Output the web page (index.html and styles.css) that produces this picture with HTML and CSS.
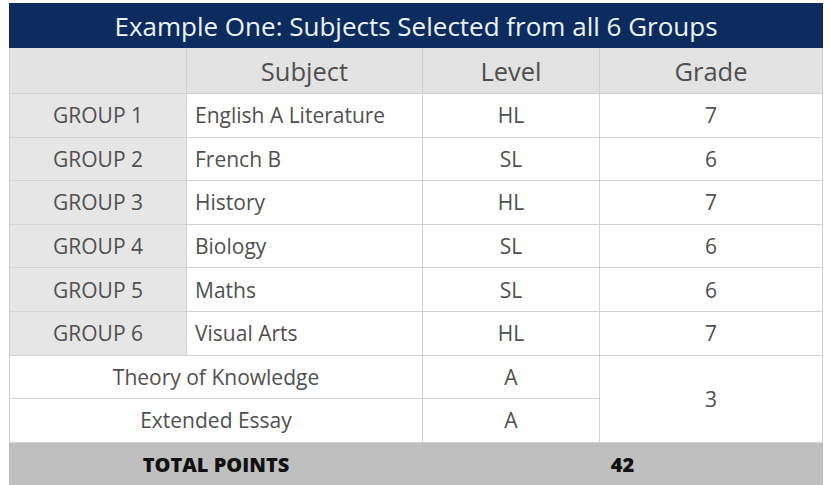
FILE: index.html
```html
<!DOCTYPE html>
<html>
<head>
<meta charset="utf-8">
<link rel="stylesheet" href="styles.css">
</head>
<body>
<table class="ib">
  <colgroup>
    <col class="c1"><col class="c2"><col class="c3"><col class="c4">
  </colgroup>
  <thead>
    <tr class="title"><th colspan="4">Example One: Subjects Selected from all 6 Groups</th></tr>
    <tr class="head"><th></th><th>Subject</th><th>Level</th><th>Grade</th></tr>
  </thead>
  <tbody>
    <tr><td class="grp">GROUP 1</td><td class="subj">English A Literature</td><td class="ctr">HL</td><td class="ctr">7</td></tr>
    <tr><td class="grp">GROUP 2</td><td class="subj">French B</td><td class="ctr">SL</td><td class="ctr">6</td></tr>
    <tr><td class="grp">GROUP 3</td><td class="subj">History</td><td class="ctr">HL</td><td class="ctr">7</td></tr>
    <tr><td class="grp">GROUP 4</td><td class="subj">Biology</td><td class="ctr">SL</td><td class="ctr">6</td></tr>
    <tr><td class="grp">GROUP 5</td><td class="subj">Maths</td><td class="ctr">SL</td><td class="ctr">6</td></tr>
    <tr><td class="grp">GROUP 6</td><td class="subj">Visual Arts</td><td class="ctr">HL</td><td class="ctr">7</td></tr>
    <tr><td class="ctr" colspan="2">Theory of Knowledge</td><td class="ctr">A</td><td class="ctr" rowspan="2">3</td></tr>
    <tr><td class="ctr" colspan="2">Extended Essay</td><td class="ctr">A</td></tr>
    <tr class="total"><td colspan="2">TOTAL POINTS</td><td colspan="2" class="sum">42</td></tr>
  </tbody>
</table>
</body>
</html>
```
FILE: styles.css
```css
html, body {
  margin: 0;
  padding: 0;
  background: #ffffff;
}
body {
  padding: 3px 0 0 9px;
  font-family: "Open Sans", "Noto Sans", sans-serif;
  color: #505050;
}
.ib {
  border-collapse: collapse;
  table-layout: fixed;
  width: 813px;
}
.c1 { width: 177px; }
.c2 { width: 236px; }
.c3 { width: 177px; }
.c4 { width: 223px; }
.ib th, .ib td {
  border: 1px solid #d2d2d2;
  padding: 0;
  font-weight: 400;
}
.title th {
  background: #0c2b5e;
  color: #eef4fa;
  height: 43px;
  font-size: 26px;
  font-weight: 500;
  border-color: #0c2b5e;
}
.head th {
  background: #e3e3e3;
  height: 45px;
  font-size: 25.5px;
  color: #4f4f4f;
  border-color: #d0d0d0;
}
.ib tbody tr { height: 43.6px; }
.ib td {
  font-size: 21px;
  background: #ffffff;
}
.ib td.grp {
  background: #e6e6e6;
  text-align: center;
}
.ib td.subj {
  text-align: left;
  padding-left: 8px;
}
.ib td.ctr { text-align: center; }
.total td {
  background: #bfbfbf;
  color: #111111;
  font-weight: 800;
  font-size: 20px;
  text-align: center;
  border-color: #bdbdbd;
}
.total td.sum {
  border-left: 1px solid #7a7a7a;
}
```
